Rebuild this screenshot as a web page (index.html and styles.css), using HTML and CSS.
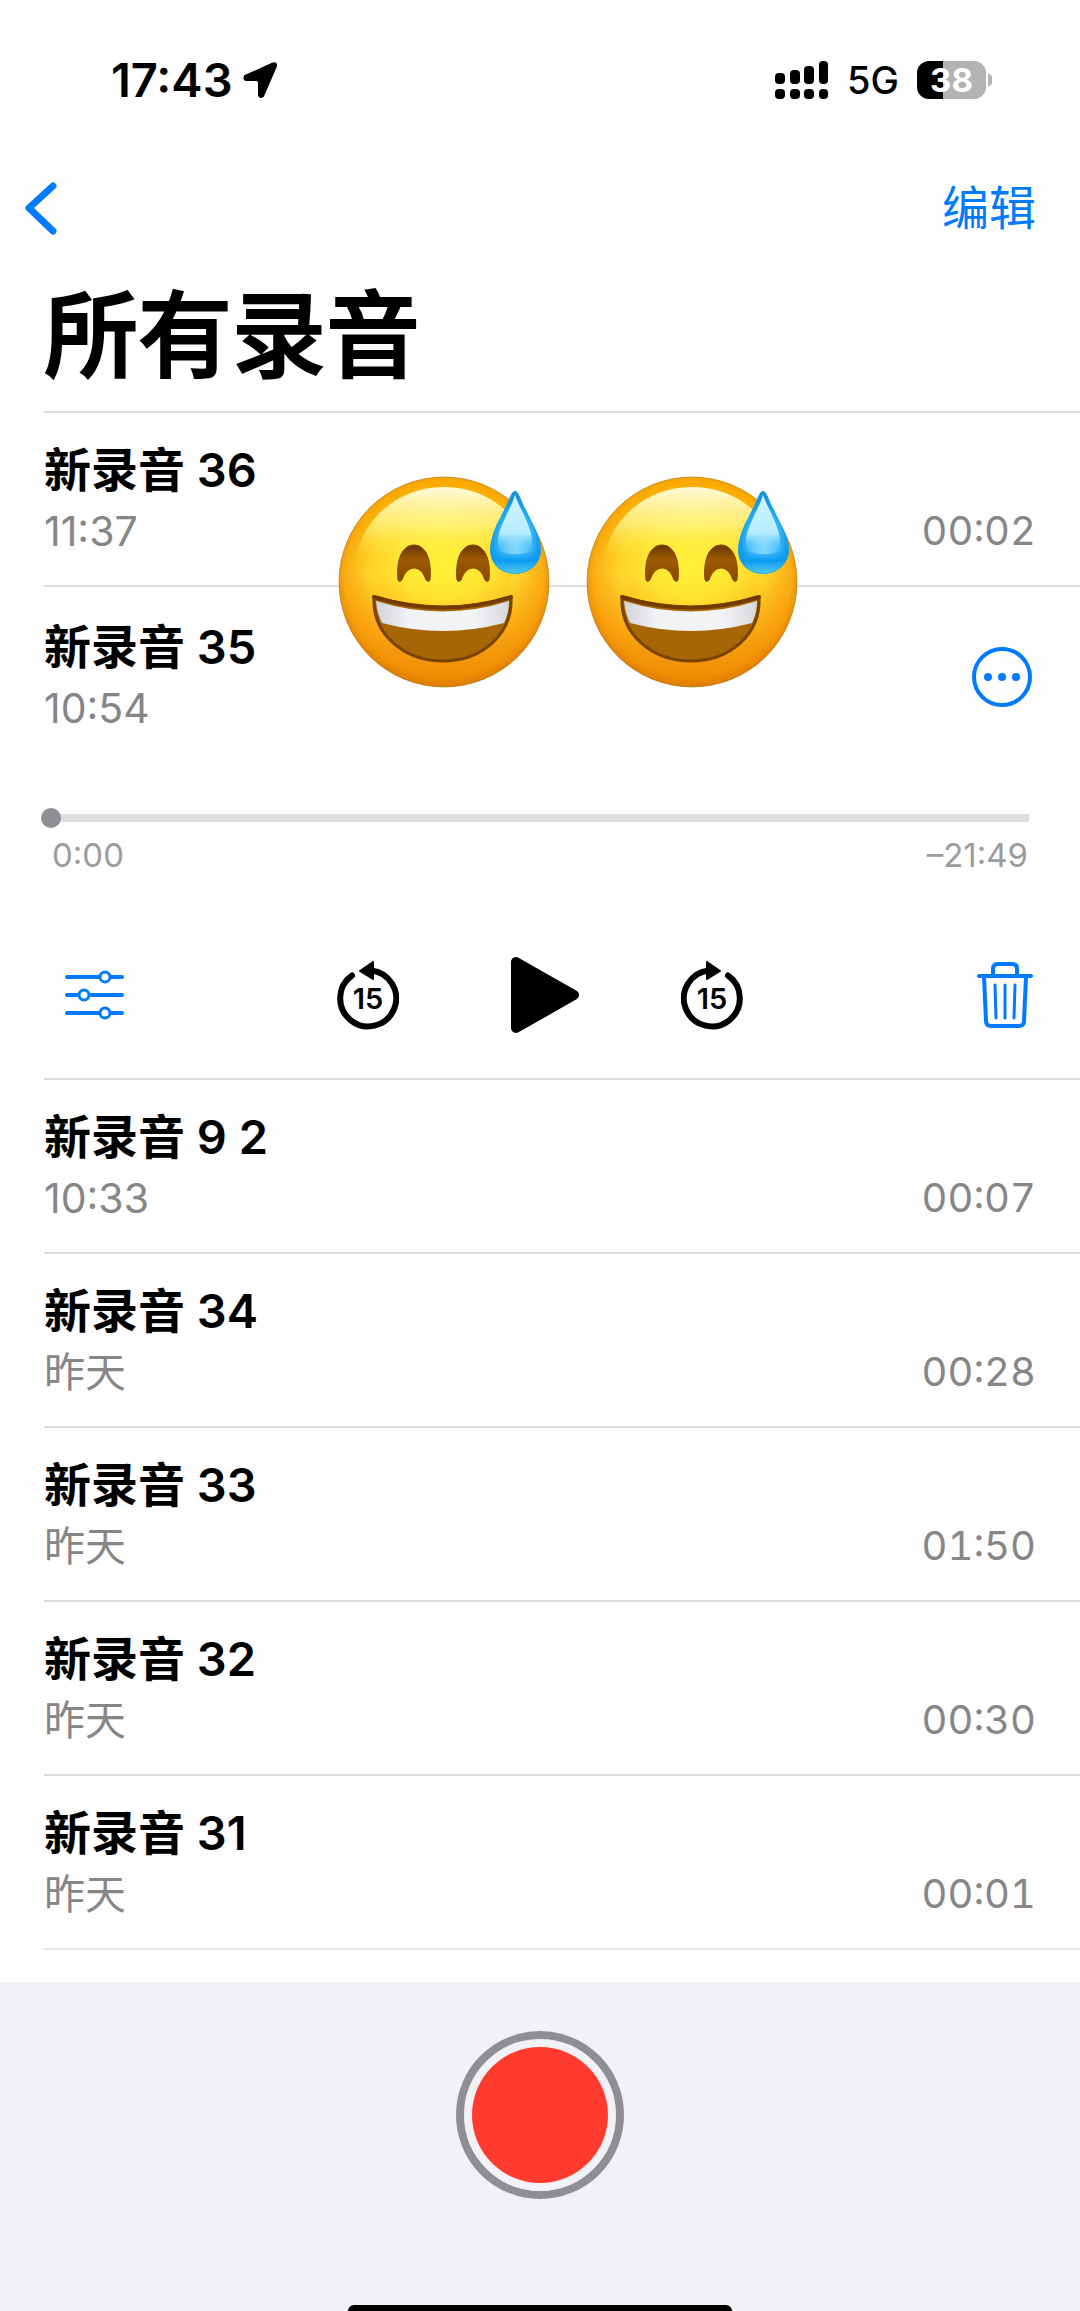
FILE: index.html
```html
<!DOCTYPE html>
<html lang="zh-CN">
<head>
    <meta charset="UTF-8">
    <meta name="viewport" content="width=device-width, initial-scale=1.0">
    <title>所有录音</title>
    <link rel="stylesheet" href="styles.css">
</head>
<body>
    <header class="status-bar">
        <div class="status-left">
            <span class="clock">17:43</span>
            <svg width="36" height="38" viewBox="0 0 36 38" aria-hidden="true">
                <path d="M31 2.500 L3 15 Q1.500 18.500 4 19 H14.500 Q17 19 17 21.500 V34 Q18 37.500 21 35 L34 5 Q34.500 1.500 31 2.500 Z" fill="#000" stroke="#000" stroke-width="2" stroke-linejoin="round"/>
            </svg>
        </div>
        <div class="status-right">
            <svg class="signal" width="54" height="40" viewBox="0 0 54 40" aria-hidden="true">
                <rect x="0" y="13" width="10" height="11" rx="4"/>
                <rect x="15" y="10" width="10" height="14" rx="4"/>
                <rect x="29" y="6" width="10" height="18" rx="4"/>
                <rect x="44" y="1" width="9" height="23" rx="4"/>
                <rect x="0" y="29" width="10" height="10" rx="4"/>
                <rect x="15" y="29" width="10" height="10" rx="4"/>
                <rect x="29" y="29" width="10" height="10" rx="4"/>
                <rect x="44" y="29" width="9" height="10" rx="4"/>
            </svg>
            <span class="network">5G</span>
            <div class="battery">
                <span class="battery-level">38</span>
                <span class="battery-tip"></span>
            </div>
        </div>
    </header>

    <nav class="nav-bar">
        <button type="button" class="icon-btn" aria-label="返回">
            <svg width="34" height="54" viewBox="0 0 34 54" fill="none" stroke="#007aff" stroke-width="7" stroke-linecap="round" stroke-linejoin="round">
                <path d="M29 5 L5 27 L29 50"/>
            </svg>
        </button>
        <button type="button" class="edit-btn">编辑</button>
    </nav>

    <main>
        <h1 class="page-title">所有录音</h1>

        <ul class="recordings">
            <li class="recording">
                <h2 class="name">新录音 36</h2>
                <div class="meta"><span>11:37</span><span class="length">00:02</span></div>
            </li>

            <li class="recording open">
                <div class="open-head">
                    <div>
                        <h2 class="name">新录音 35</h2>
                        <div class="meta"><span>10:54</span></div>
                    </div>
                    <button type="button" class="icon-btn" aria-label="更多">
                        <svg width="62" height="62" viewBox="0 0 62 62" fill="#007aff">
                            <circle cx="31" cy="31" r="28" fill="none" stroke="#007aff" stroke-width="4"/>
                            <circle cx="17" cy="31" r="4"/>
                            <circle cx="31" cy="31" r="4"/>
                            <circle cx="45" cy="31" r="4"/>
                        </svg>
                    </button>
                </div>

                <input type="range" class="seek" min="0" max="1309" value="0" aria-label="播放进度">
                <div class="times"><span>0:00</span><span>–21:49</span></div>

                <div class="controls">
                    <button type="button" class="icon-btn options" aria-label="选项">
                        <svg width="60" height="52" viewBox="0 0 60 52" fill="#fff" stroke="#007aff" stroke-width="4" stroke-linecap="round">
                            <path d="M3 8 H58 M3 26 H58 M3 44 H58"/>
                            <circle cx="41" cy="8" r="5" stroke-width="3"/>
                            <circle cx="20" cy="26" r="5" stroke-width="3"/>
                            <circle cx="41" cy="44" r="5" stroke-width="3"/>
                        </svg>
                    </button>
                    <div class="transport">
                        <button type="button" class="icon-btn" aria-label="后退15秒">
                            <svg width="62" height="70" viewBox="0 0 62 70">
                                <path d="M15 15.500 A28 28 0 1 0 34 10.500" fill="none" stroke="#000" stroke-width="6" stroke-linecap="round"/>
                                <path d="M36 2 V19 L23 11 Z" stroke="#000" stroke-width="2" stroke-linejoin="round"/>
                                <text x="31" y="49" class="skip-text">15</text>
                            </svg>
                        </button>
                        <button type="button" class="icon-btn" aria-label="播放">
                            <svg width="80" height="78" viewBox="0 0 80 78">
                                <path d="M16 6 V72 L74 39 Z" stroke="#000" stroke-width="10" stroke-linejoin="round"/>
                            </svg>
                        </button>
                        <button type="button" class="icon-btn" aria-label="前进15秒">
                            <svg width="62" height="70" viewBox="0 0 62 70">
                                <path d="M47 15.500 A28 28 0 1 1 28 10.500" fill="none" stroke="#000" stroke-width="6" stroke-linecap="round"/>
                                <path d="M26 2 V19 L39 11 Z" stroke="#000" stroke-width="2" stroke-linejoin="round"/>
                                <text x="31" y="49" class="skip-text">15</text>
                            </svg>
                        </button>
                    </div>
                    <button type="button" class="icon-btn delete" aria-label="删除">
                        <svg width="58" height="68" viewBox="0 0 58 68" fill="none" stroke="#007aff" stroke-width="4" stroke-linecap="round">
                            <path d="M3 15 H55"/>
                            <path d="M17 14 V8 Q17 3 22 3 H36 Q41 3 41 8 V14"/>
                            <path d="M8 16 L10 60 Q10 65 15 65 H43 Q48 65 48 60 L50 16"/>
                            <path d="M19 24 L20 57 M29 24 V57 M39 24 L38 57" stroke-width="3"/>
                        </svg>
                    </button>
                </div>
            </li>

            <li class="recording">
                <h2 class="name">新录音 9 2</h2>
                <div class="meta"><span>10:33</span><span class="length">00:07</span></div>
            </li>
            <li class="recording">
                <h2 class="name">新录音 34</h2>
                <div class="meta"><span>昨天</span><span class="length">00:28</span></div>
            </li>
            <li class="recording">
                <h2 class="name">新录音 33</h2>
                <div class="meta"><span>昨天</span><span class="length">01:50</span></div>
            </li>
            <li class="recording">
                <h2 class="name">新录音 32</h2>
                <div class="meta"><span>昨天</span><span class="length">00:30</span></div>
            </li>
            <li class="recording">
                <h2 class="name">新录音 31</h2>
                <div class="meta"><span>昨天</span><span class="length">00:01</span></div>
            </li>
        </ul>

        <!-- stickers over the list -->
        <div class="stickers" aria-hidden="true">
            <svg width="212" height="212" viewBox="0 0 212 212">
                <defs>
                    <linearGradient id="face" x1="0" y1="0" x2="0" y2="1">
                        <stop offset="0" stop-color="#ffc000"/>
                        <stop offset="0.45" stop-color="#ffd12a"/>
                        <stop offset="0.75" stop-color="#fbab14"/>
                        <stop offset="1" stop-color="#e88508"/>
                    </linearGradient>
                    <radialGradient id="edge" cx="0.5" cy="0.48" r="0.52">
                        <stop offset="0.68" stop-color="#f08a00" stop-opacity="0"/>
                        <stop offset="0.9" stop-color="#f58f00" stop-opacity="0.5"/>
                        <stop offset="1" stop-color="#d97800" stop-opacity="0.8"/>
                    </radialGradient>
                    <radialGradient id="glow" cx="0.5" cy="0.5" r="0.5">
                        <stop offset="0" stop-color="#fff33c"/>
                        <stop offset="0.5" stop-color="#ffeb34" stop-opacity="0.8"/>
                        <stop offset="1" stop-color="#ffd52a" stop-opacity="0"/>
                    </radialGradient>
                    <linearGradient id="shine" x1="0" y1="0" x2="0" y2="1">
                        <stop offset="0" stop-color="#fffbd8"/>
                        <stop offset="0.4" stop-color="#fff88c" stop-opacity="0.7"/>
                        <stop offset="0.75" stop-color="#ffee40" stop-opacity="0"/>
                    </linearGradient>
                    <linearGradient id="eye" x1="0" y1="0" x2="0" y2="1">
                        <stop offset="0" stop-color="#6a3600"/>
                        <stop offset="0.4" stop-color="#9c5a02"/>
                        <stop offset="1" stop-color="#8a4a00"/>
                    </linearGradient>
                    <linearGradient id="teeth" x1="0" y1="0" x2="1" y2="0">
                        <stop offset="0" stop-color="#d2d4da"/>
                        <stop offset="0.25" stop-color="#f2f3f5"/>
                        <stop offset="0.75" stop-color="#f2f3f5"/>
                        <stop offset="1" stop-color="#d6d8dc"/>
                    </linearGradient>
                    <radialGradient id="drop" cx="0.5" cy="0.62" r="0.55">
                        <stop offset="0" stop-color="#a4e8ff"/>
                        <stop offset="0.4" stop-color="#62c8fb"/>
                        <stop offset="0.8" stop-color="#12a0f2"/>
                        <stop offset="1" stop-color="#1c92dc"/>
                    </radialGradient>
                    <linearGradient id="drop-light" x1="0" y1="0" x2="0" y2="1">
                        <stop offset="0" stop-color="#d5f5ff"/>
                        <stop offset="0.65" stop-color="#b4edff"/>
                        <stop offset="1" stop-color="#3cb8fa" stop-opacity="0"/>
                    </linearGradient>
                    <linearGradient id="drop-low" x1="0" y1="0" x2="0" y2="1">
                        <stop offset="0" stop-color="#0c9bf4" stop-opacity="0"/>
                        <stop offset="0.5" stop-color="#0c9bf4"/>
                        <stop offset="1" stop-color="#4cc8ee"/>
                    </linearGradient>
                </defs>
                <g id="sweat-smile">
                    <circle cx="106" cy="106" r="105" fill="url(#face)"/>
                    <circle cx="106" cy="106" r="105" fill="url(#edge)"/>
                    <ellipse cx="106" cy="86" rx="90" ry="74" fill="url(#glow)"/>
                    <path d="M106 11 C58 11 22 45 16 90 Q106 125 196 90 C190 45 154 11 106 11 Z" fill="url(#shine)"/>
                    <circle cx="106" cy="106" r="105" fill="none" stroke="#a87820" stroke-opacity="0.6" stroke-width="1"/>
                    <g fill="url(#eye)" stroke="#854600" stroke-width="1">
                        <path d="M60 104 C58 82 65 69 76 69 C87 69 94 82 92 104 Q91 107 88 104 C83 88 69 88 64 104 Q61 107 60 104 Z"/>
                        <path d="M119 104 C117 82 124 69 135 69 C146 69 153 82 151 104 Q150 107 147 104 C142 88 128 88 123 104 Q120 107 119 104 Z"/>
                    </g>
                    <path d="M36 121 Q105 142 173 121 C175 158 144 185 105 185 C66 185 34 158 36 121 Z" fill="#a66605" stroke="#7a4300" stroke-width="3" stroke-linejoin="round"/>
                    <path d="M38 125 Q105 146 171 125 Q171 137 166 147 Q105 163 44 147 Q39 137 38 125 Z" fill="url(#teeth)"/>
                    <path d="M36 121 Q105 142 173 121" fill="none" stroke="#743b00" stroke-width="4" stroke-linecap="round"/>
                    <path d="M177 15 C180 15 182 21 185 28 L196 50 C201 60 203 67 203 74 C203 88 191 98 177 98 C163 98 152 88 152 74 C152 67 154 60 158 50 L169 28 C172 21 174 15 177 15 Z" fill="url(#drop)"/>
                    <path d="M177 19 C181 31 194 51 194 65 C194 82 160 82 160 65 C160 51 174 31 177 19 Z" fill="url(#drop-light)"/>
                    <path d="M153 72 Q177 84 202 72 C203 88 191 97 177 97 C163 97 152 88 153 72 Z" fill="url(#drop-low)"/>
                </g>
            </svg>
            <svg width="212" height="212" viewBox="0 0 212 212">
                <use href="#sweat-smile"/>
            </svg>
        </div>
    </main>

    <footer class="record-bar">
        <button type="button" class="record-btn" aria-label="录音"></button>
        <div class="home-indicator"></div>
    </footer>
</body>
</html>
```
FILE: styles.css
```css
* {
    box-sizing: border-box;
}
body {
    margin: 0;
    min-height: 100vh;
    display: flex;
    flex-direction: column;
    background-color: #fefefe;
    color: #000;
    font-family: Inter, "Noto Sans CJK SC", sans-serif;
}
h1, h2, ul {
    margin: 0;
    padding: 0;
}
svg {
    display: block;
}
button {
    padding: 0;
    border: none;
    background: none;
    font-family: inherit;
    cursor: pointer;
}

/* status bar */
.status-bar {
    display: flex;
    justify-content: space-between;
    align-items: center;
    padding: 52px 88px 0 111px;
}
.status-left, .status-right {
    display: flex;
    align-items: center;
}
.status-left {
    gap: 9px;
}
.status-right {
    gap: 18px;
}
.clock {
    font-size: 47px;
    line-height: 56px;
    font-weight: 600;
}
.network {
    font-size: 38px;
    line-height: 56px;
    font-weight: 500;
}
.battery {
    display: flex;
    align-items: center;
    gap: 2px;
}
.battery-level {
    width: 69px;
    height: 38px;
    border-radius: 12px;
    background: linear-gradient(to right, #000 38%, #b3b3b3 38%);
    color: #fff;
    font-size: 33px;
    line-height: 38px;
    font-weight: 700;
    text-align: center;
}
.battery-tip {
    width: 4px;
    height: 12px;
    border-radius: 0 4px 4px 0;
    background-color: #b3b3b3;
}

/* navigation */
.nav-bar {
    display: flex;
    justify-content: space-between;
    align-items: center;
    padding: 70px 44px 0 24px;
}
.edit-btn {
    color: #007aff;
    font-size: 47px;
    line-height: 60px;
}

main {
    position: relative;
}
.page-title {
    padding: 40px 44px 16px;
    font-size: 94px;
    line-height: 117px;
    font-weight: 500;
    -webkit-text-stroke: 2px #000;
}

/* list */
.recordings {
    list-style: none;
    margin-left: 44px;
    margin-bottom: 32px;
    border-bottom: 2px solid #e6e6e6;
}
.recording {
    min-height: 174px;
    padding: 30px 44px 0 0;
    border-top: 2px solid #dcdcdc;
}
.name {
    font-size: 47px;
    line-height: 54px;
    font-weight: 600;
}
.meta {
    display: flex;
    justify-content: space-between;
    margin-top: 9px;
    color: #868686;
    font-size: 41px;
    line-height: 50px;
}
.length {
    font-size: 40px;
    font-variant-numeric: tabular-nums;
}

/* opened recording with player */
.open {
    padding-top: 33px;
    padding-bottom: 44px;
}
.open-head {
    display: flex;
    justify-content: space-between;
    align-items: center;
    padding-right: 3px;
}
.seek {
    appearance: none;
    -webkit-appearance: none;
    display: block;
    width: 100%;
    height: 20px;
    margin: 75px 0 0 -3px;
    background: linear-gradient(#dedede, #dedede) center / calc(100% - 8px) 8px no-repeat;
    cursor: pointer;
}
.seek::-webkit-slider-thumb {
    -webkit-appearance: none;
    width: 20px;
    height: 20px;
    border-radius: 50%;
    background-color: #8e8e93;
}
.times {
    display: flex;
    justify-content: space-between;
    padding: 7px 8px 0 8px;
    color: #9c9c9c;
    font-size: 33px;
    line-height: 40px;
}
.controls {
    display: grid;
    grid-template-columns: 1fr auto 1fr;
    align-items: center;
    margin-top: 81px;
}
.options {
    justify-self: start;
    padding-left: 20px;
}
.delete {
    justify-self: end;
    padding-right: 2px;
}
.transport {
    display: flex;
    align-items: center;
    gap: 101px;
}
.skip-text {
    font-size: 29px;
    font-weight: 600;
    text-anchor: middle;
}

.stickers {
    position: absolute;
    top: 238px;
    left: 338px;
    display: flex;
    gap: 36px;
}

/* record button */
.record-bar {
    flex: 1;
    display: flex;
    flex-direction: column;
    justify-content: space-between;
    align-items: center;
    padding-top: 49px;
    background-color: #f1f1f6;
}
.record-btn {
    width: 168px;
    height: 168px;
    padding: 8px;
    border: 8px solid #8e8e93;
    border-radius: 50%;
    background-color: #ff3b30;
    background-clip: content-box;
}
.home-indicator {
    width: 384px;
    height: 6px;
    border-radius: 6px 6px 0 0;
    background-color: #000;
}
```
